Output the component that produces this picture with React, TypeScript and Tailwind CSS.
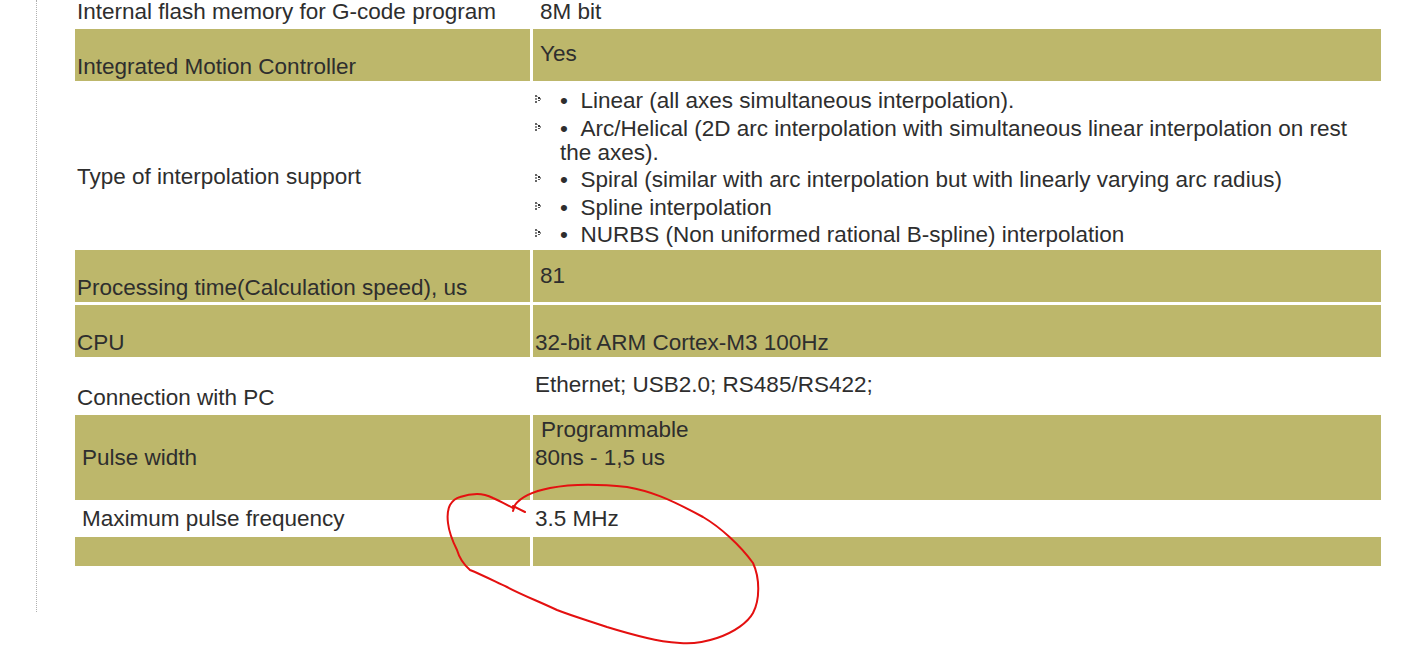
import React from 'react';

const items = [
  'Linear (all axes simultaneous interpolation).',
  'Arc/Helical (2D arc interpolation with simultaneous linear interpolation on rest the axes).',
  'Spiral (similar with arc interpolation but with linearly varying arc radius)',
  'Spline interpolation',
  'NURBS (Non uniformed rational B-spline) interpolation',
];

// tiny dotted arrow used as list marker
const Marker = () => (
  <svg width="7" height="8" viewBox="0 0 7 8" className="absolute left-[-25px] top-[6px]">
    <rect x="0" y="0" width="2" height="2" fill="#666" />
    <rect x="2" y="1" width="1" height="1" fill="#aaa" />
    <rect x="3" y="2" width="2" height="2" fill="#333" />
    <rect x="5" y="3" width="1" height="2" fill="#888" />
    <rect x="0" y="3" width="2" height="2" fill="#888" />
    <rect x="3" y="5" width="2" height="1" fill="#555" />
    <rect x="0" y="6" width="2" height="2" fill="#666" />
  </svg>
);

export default function App() {
  const olive = 'bg-[#bdb76b]';

  return (
    <div
      className="relative w-[1428px] h-[645px] bg-white overflow-hidden text-[22.5px] leading-[24px] text-[#2e2e2e]"
      style={{ fontFamily: '"Liberation Sans", Arial, sans-serif' }}
    >
      <div className="ml-[36px] border-l border-dotted border-[#b0b0b0] h-[612px] pl-[38px]">
        <div className="w-[1306px] flex flex-col">
          {/* Internal flash */}
          <div className="grid grid-cols-[455px_848px] gap-x-[3px] h-[29px]">
            <div className="pl-[2px]">Internal flash memory for G-code program</div>
            <div className="pl-[7px]">8M bit</div>
          </div>

          {/* Integrated motion controller */}
          <div className="grid grid-cols-[455px_848px] gap-x-[3px] h-[52px]">
            <div className={`${olive} pl-[2px] pt-[26px]`}>Integrated Motion Controller</div>
            <div className={`${olive} pl-[7px] pt-[13px]`}>Yes</div>
          </div>

          {/* Interpolation */}
          <div className="grid grid-cols-[455px_848px] gap-x-[3px] h-[169px]">
            <div className="pl-[2px] pt-[84px]">Type of interpolation support</div>
            <ul className="pl-[27px] pt-[8px] flex flex-col gap-[3.5px]">
              {items.map((t) => (
                <li key={t} className="relative pr-[8px]">
                  <Marker />
                  {'•\u00a0\u00a0' + t}
                </li>
              ))}
            </ul>
          </div>

          {/* Processing time */}
          <div className="grid grid-cols-[455px_848px] gap-x-[3px] h-[52px]">
            <div className={`${olive} pl-[2px] pt-[26px]`}>Processing time(Calculation speed), us</div>
            <div className={`${olive} pl-[7px] pt-[14px]`}>81</div>
          </div>

          <div className="h-[3px]" />

          {/* CPU */}
          <div className="grid grid-cols-[455px_848px] gap-x-[3px] h-[52px]">
            <div className={`${olive} pl-[2px] pt-[26px]`}>CPU</div>
            <div className={`${olive} pl-[2px] pt-[26px]`}>32-bit ARM Cortex-M3 100Hz</div>
          </div>

          {/* Connection */}
          <div className="grid grid-cols-[455px_848px] gap-x-[3px] h-[58px]">
            <div className="pl-[2px] pt-[29px]">Connection with PC</div>
            <div className="pl-[2px] pt-[16px]">Ethernet; USB2.0; RS485/RS422;</div>
          </div>

          {/* Pulse width */}
          <div className="grid grid-cols-[455px_848px] gap-x-[3px] h-[85px]">
            <div className={`${olive} pl-[7px] pt-[31px]`}>Pulse width</div>
            <div className={`${olive} pl-[2px] pt-[3px]`}>
              <div className="pl-[6px]">Programmable</div>
              <div className="pt-[4px]">80ns - 1,5 us</div>
            </div>
          </div>

          {/* Max pulse frequency */}
          <div className="grid grid-cols-[455px_848px] gap-x-[3px] h-[37px]">
            <div className="pl-[7px] pt-[7px]">Maximum pulse frequency</div>
            <div className="pl-[2px] pt-[7px]">3.5 MHz</div>
          </div>

          {/* empty row */}
          <div className="grid grid-cols-[455px_848px] gap-x-[3px] h-[29px]">
            <div className={olive} />
            <div className={olive} />
          </div>
        </div>
      </div>

      {/* hand drawn red annotation */}
      <svg
        className="absolute left-0 top-0 pointer-events-none"
        width="1428"
        height="645"
        viewBox="0 0 1428 645"
        fill="none"
      >
        <path
          d="M525 512 L513 506 M513 511 L515 505
             C520 498 530 492 550 488
             C570 484 600 484 627 487
             C650 491 668 498 703 517
             C720 527 740 545 753 563
             C760 578 760 600 753 613
             C748 622 735 632 717 638
             C705 642 690 644 680 643
             C665 642 655 640 647 638
             C630 634 620 631 607 627
             C590 621 575 617 557 610
             C540 602 520 594 507 587
             C490 579 480 574 470 570
             C462 563 459 557 457 550
             C452 540 449 532 448 523
             C447 515 448 509 450 505
             C453 500 456 498 460 497
             C466 495 472 494 477 494
             C484 494 489 496 493 498
             C500 501 507 505 513 508"
          stroke="#e41010"
          strokeWidth="2"
          strokeLinecap="round"
          strokeLinejoin="round"
        />
      </svg>
    </div>
  );
}
